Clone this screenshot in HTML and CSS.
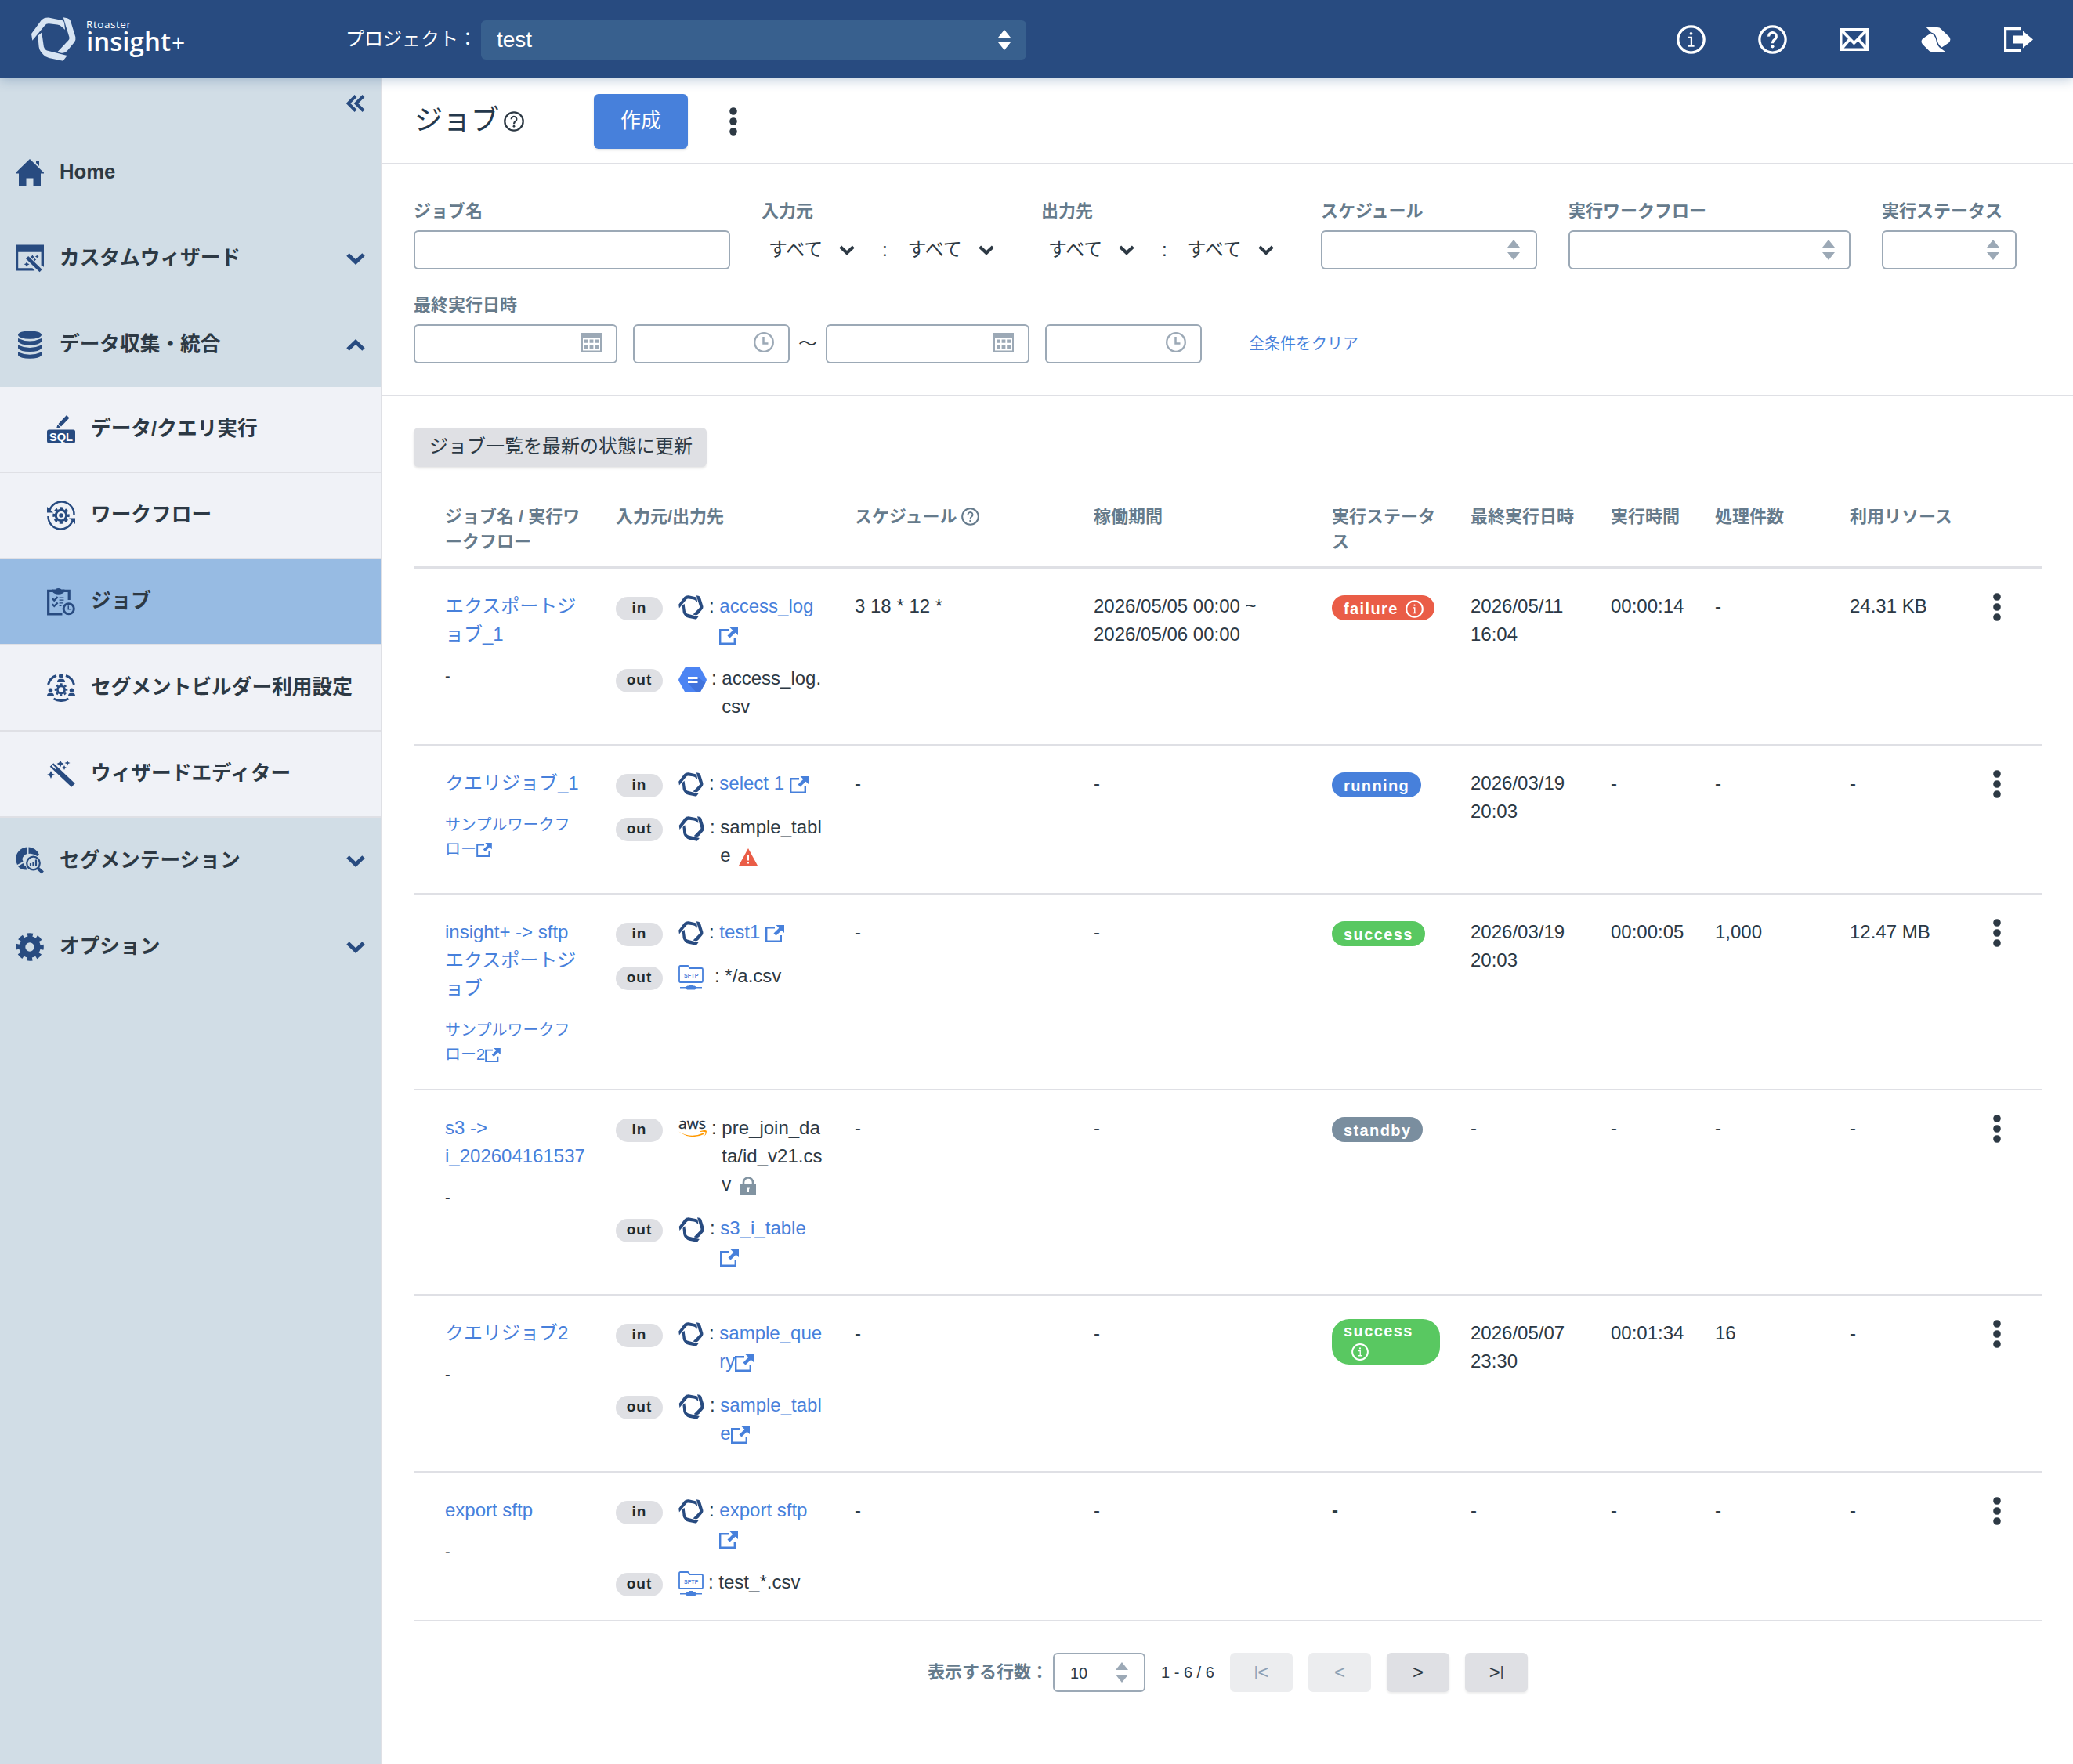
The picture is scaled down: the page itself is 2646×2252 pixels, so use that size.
FILE: index.html
```html
<!DOCTYPE html>
<html lang="ja">
<head>
  <meta charset="UTF-8"/>
  <title>ジョブ - Rtoaster insight+</title>
  <link rel="stylesheet" href="styles.css">
</head>
<body>
  <!-- アイコン定義 -->
  <svg class="defs" width="0" height="0">
    <symbol id="ring" viewBox="30 36 172 169">
      <path d="M30 100L68 48Q80 36 100 38L148 48Q156 50 157 60L160 84L146 72Q140 66 130 65L98 61Q88 60 82 68L34 126Z"/>
      <path d="M153 37L168 40Q178 42 181 50L200 112Q202 122 196 132L168 166Q158 176 146 174L130 170L172 126Q178 120 176 112L164 74Z"/>
      <path d="M55 108L70 95L78 150Q80 160 90 164L120 172L168 184L152 204L98 193Q84 190 76 180L66 168Q60 160 59 150Z"/>
    </symbol>
    <symbol id="info" viewBox="0 0 36 36">
      <circle cx="18" cy="18" r="16.2" fill="none" stroke="currentColor" stroke-width="3.2"/>
      <circle cx="18" cy="10.5" r="1.8"/>
      <path d="M14.5 15.5H18.4V25.8M14 25.8H22" fill="none" stroke="currentColor" stroke-width="2.2"/>
    </symbol>
    <symbol id="help" viewBox="0 0 36 36">
      <circle cx="18" cy="18" r="16.2" fill="none" stroke="currentColor" stroke-width="3.2"/>
      <path d="M13.3 14.2a4.7 4.7 0 1 1 7.4 3.7c-2 1.3-2.7 2-2.7 4.6" fill="none" stroke="currentColor" stroke-width="3"/>
      <circle cx="18" cy="26.6" r="2"/>
    </symbol>
    <symbol id="mail" viewBox="0 0 37 29">
      <path d="M1.7 1.7H35.3V27.3H1.7ZM2 2L14 14.5L18.5 19L23 14.5L35 2M2 27L13.5 13.5M35 27L23.5 13.5" fill="none" stroke="currentColor" stroke-width="3.6"/>
    </symbol>
    <symbol id="bird" viewBox="0 0 38 31">
      <path d="M6.8 0H21Q24 0 26 2.4L36 12Q39 16 35.5 19.5L26.5 25.6C22 22 21.5 19 20.2 15C19 9.500 17 7.500 13.2 6.500Z"/>
      <path d="M12.400 7.500L2 14.500Q-1 18 2 21.500L10.500 30Q11.500 31 13 31H31L25.500 27C20.500 23.500 20 20 19.200 16C18.200 11 15.500 9 12.400 7.500Z"/>
    </symbol>
    <symbol id="logout" viewBox="0 0 37 31">
      <path d="M22 1.6H1.6V29.4H22" fill="none" stroke="currentColor" stroke-width="3.2"/>
      <path d="M12 10.5H24V4.5L37 15.5L24 26.5V20.5H12Z"/>
    </symbol>
    <symbol id="updown" viewBox="0 0 16 26">
      <path d="M8 0L16 10H0ZM0 16H16L8 26Z"/>
    </symbol>
    <symbol id="down" viewBox="0 0 24 15">
      <path d="M2 2L12 11.5L22 2" fill="none" stroke="currentColor" stroke-width="5"/>
    </symbol>
    <symbol id="up" viewBox="0 0 24 15">
      <path d="M2 13L12 3.5L22 13" fill="none" stroke="currentColor" stroke-width="5"/>
    </symbol>
    <symbol id="collapse" viewBox="0 0 24 22">
      <path d="M12 1.5L2.5 11L12 20.5M22 1.5L12.5 11L22 20.5" fill="none" stroke="currentColor" stroke-width="4"/>
    </symbol>
    <symbol id="home" viewBox="0 0 36 34">
      <path d="M18 0L36 17.5V18.5H32V34H22.5V24.5H13.5V34H4V18.5H0V17.5ZM26 2H30V9L26 5Z"/>
    </symbol>
    <symbol id="sparkles" viewBox="0 0 36 34">
      <path d="M6 5.500L33.500 31.500" fill="none" stroke="currentColor" stroke-width="6.5"/>
      <path d="M6.500 6L11.500 10.700" fill="none" stroke="#f0f2f7" stroke-width="1.8"/>
      <path d="M17 -.5L18.5 2.5L21.5 4L18.5 5.5L17 8.500L15.5 5.5L12.5 4L15.5 2.5ZM26 -.5L27 2L29.5 3L27 4L26 6.5L25 4L22.5 3L25 2ZM22 6L23 8L25 9L23 10L22 12L21 10L19 9L21 8ZM5 13L6.600 16.400L10 18L6.600 19.600L5 23L3.400 19.600L0 18L3.400 16.400Z"/>
    </symbol>
    <symbol id="wizard" viewBox="0 0 37 36">
      <path d="M0 0H37V29L33.5 27V9.5H3.3V30.5H22L25 34H0Z"/>
      <path d="M15 16.5L33 34" fill="none" stroke="currentColor" stroke-width="4.6"/>
      <path d="M22 13l1 2 2 1-2 1-1 2-1-2-2-1 2-1ZM28 13l.8 1.7 1.7.8-1.7.8L28 18l-.8-1.7-1.7-.8 1.7-.8ZM25 17.5l.7 1.3 1.3.7-1.3.7L25 21.5l-.7-1.3-1.3-.7 1.3-.7ZM14.5 22l1.2 2.3 2.3 1.2-2.3 1.2-1.2 2.3-1.2-2.3-2.3-1.2 2.3-1.2Z"/>
    </symbol>
    <symbol id="db" viewBox="0 0 36 36">
      <ellipse cx="18" cy="5.5" rx="15" ry="5.3"/>
      <path d="M3 10Q18 17 33 10V14Q30 18.5 18 18.5Q6 18.5 3 14ZM3 18.5Q18 25.5 33 18.5V22.5Q30 27 18 27Q6 27 3 22.5ZM3 27.5Q18 34 33 27.5V31.5Q30 35.8 18 35.8Q6 35.8 3 31.5Z"/>
    </symbol>
    <symbol id="sql" viewBox="0 0 36 36">
      <path d="M25 0L28.5 3.5L18 14.5L14.5 11ZM13.5 12L17.3 15.6L12 17Z"/>
      <rect y="18.500" width="36" height="17" rx="2.5"/>
      <text x="3" y="32.500" font-size="15.5" font-weight="bold" fill="#fff" textLength="30" lengthAdjust="spacingAndGlyphs">SQL</text>
    </symbol>
    <symbol id="gear" viewBox="0 0 36 36">
      <circle cx="18" cy="18" r="9.7" fill="none" stroke="currentColor" stroke-width="8"/>
      <circle cx="18" cy="18" r="14.8" fill="none" stroke="currentColor" stroke-width="6" stroke-dasharray="6.6 5.024" stroke-dashoffset="3.3"/>
    </symbol>
    <symbol id="ogear" viewBox="0 0 36 36">
      <circle cx="18" cy="18" r="11" fill="none" stroke="currentColor" stroke-width="5"/>
      <circle cx="18" cy="18" r="15" fill="none" stroke="currentColor" stroke-width="5" stroke-dasharray="6.6 5.181" stroke-dashoffset="3.3"/>
      <circle cx="18" cy="18" r="4.5"/>
    </symbol>
    <symbol id="flow" viewBox="0 0 36 36">
      <path d="M3.5 11A16 16 0 0 1 34.5 17M32.5 25A16 16 0 0 1 1.5 19" fill="none" stroke="currentColor" stroke-width="2.5"/>
      <path d="M0 7V14.5H8ZM36 29V21.5H28Z"/>
      <use href="#ogear" x="7" y="7" width="22" height="22"/>
    </symbol>
    <symbol id="job" viewBox="0 0 37 36">
      <path d="M8 4H1.7V34.3H20M29 16V4H22" fill="none" stroke="currentColor" stroke-width="3.3"/>
      <path d="M7 2H11Q15 -1 19 2H23V5Q21 8.5 15 8.5Q9 8.5 7 5Z"/>
      <path d="M7 14L9.5 16.5L14 12M7 21.5L9.5 24L14 19.5" fill="none" stroke="currentColor" stroke-width="2.4"/>
      <path d="M16 13H22M16 16H22M16 20H21M16 23.5H19" fill="none" stroke="currentColor" stroke-width="1.3"/>
      <circle cx="28.5" cy="27.5" r="6.8" fill="none" stroke="currentColor" stroke-width="3"/>
      <path d="M28 23.5V28H32" fill="none" stroke="currentColor" stroke-width="1.5"/>
    </symbol>
    <symbol id="person" viewBox="0 0 10 11">
      <circle cx="5" cy="3" r="3"/>
      <path d="M0 11Q0 7 3.5 6.8H6.5Q10 7 10 11Z"/>
    </symbol>
    <symbol id="builder" viewBox="0 0 36 36">
      <path d="M1.5 14Q4 5 12 2.5M34.5 14Q32 5 24 2.5M8.5 32Q18 37 27.5 32" fill="none" stroke="currentColor" stroke-width="3"/>
      <use href="#person" x="13" y="0" width="10" height="11"/>
      <use href="#person" x="0" y="18" width="9" height="11"/>
      <use href="#person" x="27" y="18" width="9" height="11"/>
      <circle cx="18" cy="20.5" r="4.6" fill="none" stroke="currentColor" stroke-width="2.8"/>
      <circle cx="18" cy="20.5" r="7" fill="none" stroke="currentColor" stroke-width="2.6" stroke-dasharray="2.8 2.698" stroke-dashoffset="1.4"/>
    </symbol>
    <symbol id="segment" viewBox="0 0 36 36">
      <path d="M14.5 .5V9Q9.5 10.500 8.5 16L9.5 19L2 23Q-2.5 13 4 5.5Q8 .8 14.5 .5ZM16.5 .5Q26 1 30 10L27.5 12Q20 8 16.500 9ZM3 25L9.5 21Q11 24 13 25L14.5 29.5Q7 30 3 25Z"/>
      <circle cx="22.5" cy="21" r="8.3" fill="none" stroke="currentColor" stroke-width="2.2"/>
      <path d="M19 24.5V21M22.5 24.5V19M26 24.5V16.5" stroke="currentColor" stroke-width="2.2"/>
      <path d="M28.5 27.5L34.5 33" stroke="currentColor" stroke-width="4.2"/>
    </symbol>
    <symbol id="ext" viewBox="0 0 24 22">
      <path d="M12 3.2H1.2V20.8H19.8V13" fill="none" stroke="currentColor" stroke-width="2.4"/>
      <path d="M13.5 0H24V10L20.5 6.8L13.5 13.5L10.5 10.5L17.3 3.7Z"/>
    </symbol>
    <symbol id="calendar" viewBox="0 0 26 25">
      <path fill-rule="evenodd" d="M0 0H26V25H0ZM2 7V22.500H24V7Z"/>
      <path d="M4 8.500H8.800V12.800H4ZM10.600 8.500H15.400V12.800H10.600ZM17.200 8.500H22V12.800H17.200ZM4 15.500H8.800V20.500H4ZM10.600 15.500H15.400V20.500H10.600ZM17.200 15.500H22V20.500H17.200Z"/>
    </symbol>
    <symbol id="clock" viewBox="0 0 26 26">
      <circle cx="13" cy="13" r="11.8" fill="none" stroke="currentColor" stroke-width="2.3"/>
      <path d="M12.5 6V14.5H18.5" fill="none" stroke="currentColor" stroke-width="2.5"/>
    </symbol>
    <symbol id="warn" viewBox="0 0 24 22">
      <path d="M12 0L24 22H0Z" fill="#ea5d47"/>
      <path d="M12 8V15.5M12 17.2V19.5" stroke="#fff" stroke-width="2"/>
    </symbol>
    <symbol id="lock" viewBox="0 0 20 24">
      <path d="M4 11V7.5A6 6 0 0 1 16 7.5V11" fill="none" stroke="currentColor" stroke-width="2.6"/>
      <rect y="10" width="20" height="14"/>
      <path d="M8 14.5H12L11 16.5V20H9V16.5Z" fill="#fff"/>
    </symbol>
    <symbol id="gcs" viewBox="0 0 36 32">
      <path d="M9.5 0H26.5Q27.5 0 28 1L35.5 14.5Q36.3 16 35.5 17.5L28 31Q27.5 32 26.5 32H9.5Q8.5 32 8 31L.5 17.5Q-.3 16 .5 14.5L8 1Q8.5 0 9.5 0Z" fill="#4c84f3"/>
      <path d="M12 20L24 12L34.5 19.5L28 31Q27.5 32 26.5 32H23Z" fill="#4173dc"/>
      <path d="M12 12H24.5V15H12ZM12 17H24.5V20H12Z" fill="#fff"/>
    </symbol>
    <symbol id="sftp" viewBox="0 0 32 32">
      <path d="M1 20.5V2.5Q1 1 2.5 1H11.5Q12.5 1 13 2L14.5 4H29.5Q31 4 31 5.5V20.5Q31 22 29.5 22H2.5Q1 22 1 20.5Z" fill="none" stroke="currentColor" stroke-width="1.8"/>
      <text x="7" y="15.500" font-size="7" font-weight="bold" textLength="18.5">SFTP</text>
      <path d="M2 28H9L11.5 26.5H14V25H18V26.5H20.5L23 28H30V29.5H23L21 31.5H11L9 29.5H2Z"/>
    </symbol>
    <symbol id="aws" viewBox="0 0 36 24">
      <text x="0" y="13" font-size="18" font-family="Open Sans" fill="#252f3e" textLength="35" lengthAdjust="spacingAndGlyphs" stroke="#252f3e" stroke-width=".3">aws</text>
      <path d="M0 16.5Q16 26 31.500 18.5L32.5 20Q16 28 0 16.5ZM28 16Q36 14 36 16.5Q36 20 33 22.5Q35 18.5 34.5 17.5Q33 16.5 28 17Z" fill="#f90"/>
    </symbol>
    <symbol id="dots" viewBox="0 0 10 36">
      <circle cx="5" cy="5" r="4.8"/><circle cx="5" cy="18" r="4.8"/><circle cx="5" cy="31" r="4.8"/>
    </symbol>
  </svg>

  <header class="header">
    <div class="logo">
      <svg width="57" height="56"><use href="#ring"/></svg>
      <svg class="logo-text" width="128" height="60">
        <text x="0" y="17.7" font-size="13.5" font-weight="500" textLength="57">Rtoaster</text>
        <text x="0" y="46.7" font-size="33" font-weight="600" textLength="108">insight</text>
        <text x="109" y="46.7" font-size="30" font-weight="400">+</text>
      </svg>
    </div>
    <span class="project-label">プロジェクト：</span>
    <div class="project-select">test<svg width="16" height="26"><use href="#updown"/></svg></div>
    <nav class="header-nav">
      <a><svg width="37" height="37"><use href="#info"/></svg></a>
      <a><svg width="37" height="37"><use href="#help"/></svg></a>
      <a><svg width="37" height="29"><use href="#mail"/></svg></a>
      <a><svg width="38" height="31"><use href="#bird"/></svg></a>
      <a class="logout"><svg width="37" height="31"><use href="#logout"/></svg></a>
    </nav>
  </header>

  <div class="layout">
    <aside class="sidebar">
      <div class="collapse"><svg width="24" height="22"><use href="#collapse"/></svg></div>
      <a class="menu"><svg width="36" height="34"><use href="#home"/></svg><span>Home</span></a>
      <a class="menu"><svg width="37" height="36"><use href="#wizard"/></svg><span>カスタムウィザード</span><svg class="arrow" width="24" height="15"><use href="#down"/></svg></a>
      <a class="menu"><svg width="36" height="36"><use href="#db"/></svg><span>データ収集・統合</span><svg class="arrow" width="24" height="15"><use href="#up"/></svg></a>
      <div class="submenu">
        <a class="menu"><svg width="36" height="36"><use href="#sql"/></svg><span>データ/クエリ実行</span></a>
        <a class="menu"><svg width="36" height="36"><use href="#flow"/></svg><span>ワークフロー</span></a>
        <a class="menu active"><svg width="37" height="36"><use href="#job"/></svg><span>ジョブ</span></a>
        <a class="menu"><svg width="36" height="36"><use href="#builder"/></svg><span>セグメントビルダー利用設定</span></a>
        <a class="menu"><svg width="36" height="34"><use href="#sparkles"/></svg><span>ウィザードエディター</span></a>
      </div>
      <a class="menu"><svg width="36" height="36"><use href="#segment"/></svg><span>セグメンテーション</span><svg class="arrow" width="24" height="15"><use href="#down"/></svg></a>
      <a class="menu"><svg width="36" height="36"><use href="#gear"/></svg><span>オプション</span><svg class="arrow" width="24" height="15"><use href="#down"/></svg></a>
    </aside>

    <main class="main">
      <div class="title-bar">
        <h1>ジョブ</h1>
        <svg class="title-help" width="26" height="26"><use href="#help"/></svg>
        <button class="btn-create">作成</button>
        <svg class="title-dots" width="10" height="36"><use href="#dots"/></svg>
      </div>

      <!-- 検索条件 -->
      <section class="filters">
        <div class="filter-row">
          <div class="field">
            <label>ジョブ名</label>
            <div class="box w-name"></div>
          </div>
          <div class="field">
            <label>入力元</label>
            <div class="pair">
              <span class="plain">すべて<svg width="20" height="13"><use href="#down"/></svg></span>
              <span class="colon">:</span>
              <span class="plain">すべて<svg width="20" height="13"><use href="#down"/></svg></span>
            </div>
          </div>
          <div class="field">
            <label>出力先</label>
            <div class="pair">
              <span class="plain">すべて<svg width="20" height="13"><use href="#down"/></svg></span>
              <span class="colon">:</span>
              <span class="plain">すべて<svg width="20" height="13"><use href="#down"/></svg></span>
            </div>
          </div>
          <div class="field">
            <label>スケジュール</label>
            <div class="box w-schedule"><svg width="16" height="26"><use href="#updown"/></svg></div>
          </div>
          <div class="field">
            <label>実行ワークフロー</label>
            <div class="box w-workflow"><svg width="16" height="26"><use href="#updown"/></svg></div>
          </div>
          <div class="field">
            <label>実行ステータス</label>
            <div class="box w-status"><svg width="16" height="26"><use href="#updown"/></svg></div>
          </div>
        </div>
        <div class="field">
          <label>最終実行日時</label>
          <div class="dates">
            <div class="box w-date"><svg width="26" height="25"><use href="#calendar"/></svg></div>
            <div class="box w-time"><svg width="26" height="26"><use href="#clock"/></svg></div>
            <span class="tilde">〜</span>
            <div class="box w-date"><svg width="26" height="25"><use href="#calendar"/></svg></div>
            <div class="box w-time"><svg width="26" height="26"><use href="#clock"/></svg></div>
            <a class="clear">全条件をクリア</a>
          </div>
        </div>
      </section>

      <!-- ジョブ一覧 -->
      <section class="list">
        <button class="btn-refresh">ジョブ一覧を最新の状態に更新</button>
        <table class="jobs">
          <colgroup>
            <col class="c-name"><col class="c-io"><col class="c-sched"><col class="c-period"><col class="c-status">
            <col class="c-last"><col class="c-time"><col class="c-count"><col class="c-res"><col class="c-menu">
          </colgroup>
          <thead>
            <tr>
              <th>ジョブ名 / 実行ワ<br>ークフロー</th>
              <th>入力元/出力先</th>
              <th>スケジュール <svg class="th-help" width="23" height="23"><use href="#help"/></svg></th>
              <th>稼働期間</th>
              <th>実行ステータ<br>ス</th>
              <th>最終実行日時</th>
              <th>実行時間</th>
              <th>処理件数</th>
              <th>利用リソース</th>
              <th></th>
            </tr>
          </thead>
          <tbody>
            <tr class="h-226">
              <td><a>エクスポートジ<br>ョブ_1</a><div class="sub">-</div></td>
              <td>
                <div class="io"><span class="tag">in</span><svg class="brand" width="32" height="31"><use href="#ring"/></svg><span>:&nbsp;</span><a>access_log<br><svg class="ext" width="24" height="22"><use href="#ext"/></svg></a></div>
                <div class="io"><span class="tag">out</span><svg width="36" height="32"><use href="#gcs"/></svg><span>:&nbsp;</span><span>access_log.<br>csv</span></div>
              </td>
              <td>3 18 * 12 *</td>
              <td>2026/05/05 00:00 ~<br>2026/05/06 00:00</td>
              <td><span class="status failure">failure<svg width="23" height="23"><use href="#info"/></svg></span></td>
              <td>2026/05/11<br>16:04</td>
              <td>00:00:14</td>
              <td>-</td>
              <td>24.31 KB</td>
              <td><svg class="dots" width="10" height="36"><use href="#dots"/></svg></td>
            </tr>
            <tr class="h-190">
              <td><a>クエリジョブ_1</a><div class="sub"><a>サンプルワークフ<br>ロー<svg class="ext" width="20" height="18"><use href="#ext"/></svg></a></div></td>
              <td>
                <div class="io"><span class="tag">in</span><svg class="brand" width="32" height="31"><use href="#ring"/></svg><span>:&nbsp;</span><a>select 1 <svg class="ext" width="24" height="22"><use href="#ext"/></svg></a></div>
                <div class="io"><span class="tag">out</span><svg class="brand" width="34" height="32"><use href="#ring"/></svg><span>:&nbsp;</span><span>sample_tabl<br>e <svg class="warn" width="24" height="22"><use href="#warn"/></svg></span></div>
              </td>
              <td>-</td>
              <td>-</td>
              <td><span class="status running">running</span></td>
              <td>2026/03/19<br>20:03</td>
              <td>-</td>
              <td>-</td>
              <td>-</td>
              <td><svg class="dots" width="10" height="36"><use href="#dots"/></svg></td>
            </tr>
            <tr class="h-250">
              <td><a>insight+ -&gt; sftp<br>エクスポートジ<br>ョブ</a><div class="sub"><a>サンプルワークフ<br>ロー2<svg class="ext" width="20" height="18"><use href="#ext"/></svg></a></div></td>
              <td>
                <div class="io"><span class="tag">in</span><svg class="brand" width="32" height="31"><use href="#ring"/></svg><span>:&nbsp;</span><a>test1 <svg class="ext" width="24" height="22"><use href="#ext"/></svg></a></div>
                <div class="io"><span class="tag">out</span><svg class="folder wide" width="32" height="32"><use href="#sftp"/></svg><span>:&nbsp;</span><span>*/a.csv</span></div>
              </td>
              <td>-</td>
              <td>-</td>
              <td><span class="status success">success</span></td>
              <td>2026/03/19<br>20:03</td>
              <td>00:00:05</td>
              <td>1,000</td>
              <td>12.47 MB</td>
              <td><svg class="dots" width="10" height="36"><use href="#dots"/></svg></td>
            </tr>
            <tr class="h-262">
              <td><a>s3 -&gt;<br>i_202604161537</a><div class="sub">-</div></td>
              <td>
                <div class="io"><span class="tag">in</span><svg class="aws" width="36" height="24"><use href="#aws"/></svg><span>:&nbsp;</span><span>pre_join_da<br>ta/id_v21.cs<br>v <svg class="lock" width="20" height="24"><use href="#lock"/></svg></span></div>
                <div class="io"><span class="tag">out</span><svg class="brand" width="34" height="32"><use href="#ring"/></svg><span>:&nbsp;</span><a>s3_i_table<br><svg class="ext" width="24" height="22"><use href="#ext"/></svg></a></div>
              </td>
              <td>-</td>
              <td>-</td>
              <td><span class="status standby">standby</span></td>
              <td>-</td>
              <td>-</td>
              <td>-</td>
              <td>-</td>
              <td><svg class="dots" width="10" height="36"><use href="#dots"/></svg></td>
            </tr>
            <tr class="h-226">
              <td><a>クエリジョブ2</a><div class="sub">-</div></td>
              <td>
                <div class="io"><span class="tag">in</span><svg class="brand" width="32" height="31"><use href="#ring"/></svg><span>:&nbsp;</span><a>sample_que<br>ry<svg class="ext" width="24" height="22"><use href="#ext"/></svg></a></div>
                <div class="io"><span class="tag">out</span><svg class="brand" width="34" height="32"><use href="#ring"/></svg><span>:&nbsp;</span><a>sample_tabl<br>e<svg class="ext" width="24" height="22"><use href="#ext"/></svg></a></div>
              </td>
              <td>-</td>
              <td>-</td>
              <td><span class="status success two-line">success<svg width="22" height="22"><use href="#info"/></svg></span></td>
              <td>2026/05/07<br>23:30</td>
              <td>00:01:34</td>
              <td>16</td>
              <td>-</td>
              <td><svg class="dots" width="10" height="36"><use href="#dots"/></svg></td>
            </tr>
            <tr class="h-190">
              <td><a>export sftp</a><div class="sub">-</div></td>
              <td>
                <div class="io"><span class="tag">in</span><svg class="brand" width="32" height="31"><use href="#ring"/></svg><span>:&nbsp;</span><a>export sftp<br><svg class="ext" width="24" height="22"><use href="#ext"/></svg></a></div>
                <div class="io"><span class="tag">out</span><svg class="folder" width="32" height="32"><use href="#sftp"/></svg><span>:&nbsp;</span><span>test_*.csv</span></div>
              </td>
              <td>-</td>
              <td>-</td>
              <td><b>-</b></td>
              <td>-</td>
              <td>-</td>
              <td>-</td>
              <td>-</td>
              <td><svg class="dots" width="10" height="36"><use href="#dots"/></svg></td>
            </tr>
          </tbody>
        </table>

        <div class="pager">
          <span class="pager-label">表示する行数：</span>
          <div class="box pager-select"><span>10</span><svg width="16" height="26"><use href="#updown"/></svg></div>
          <span class="pager-count">1 - 6 / 6</span>
          <button disabled><span class="bar">|</span>&lt;</button>
          <button disabled>&lt;</button>
          <button>&gt;</button>
          <button>&gt;<span class="bar">|</span></button>
        </div>
      </section>
    </main>
  </div>
</body>
</html>
```
FILE: styles.css
```css
* { box-sizing: border-box; }
body {
  margin: 0;
  font-family: 'Liberation Sans', 'Noto Sans CJK JP', sans-serif;
  font-size: 24px;
  line-height: 36px;
  color: #2d3944;
  background-color: #fff;
}
svg { fill: currentColor; display: block; flex: none; overflow: visible; }
.defs { display: none; }
button { font-family: inherit; font-size: 24px; border: none; border-radius: 6px; padding: 0; color: #2d3944; }
a { color: #4780db; text-decoration: none; }

/* ヘッダー */
.header {
  position: relative;
  display: flex;
  align-items: center;
  height: 100px;
  padding: 0 51px 0 40px;
  background-color: #284b80;
  color: #fff;
  box-shadow: 0 2px 14px rgba(40, 85, 135, 0.3);
}
.logo { display: flex; align-items: center; width: 401px; color: #d7e4f2; }
.logo-text { margin-left: 13px; margin-top: -4px; color: #fff; font-family: 'Open Sans', sans-serif; }
.project-label { width: 173px; white-space: nowrap; }
.project-select {
  display: flex;
  align-items: center;
  justify-content: space-between;
  width: 696px;
  height: 50px;
  margin-top: 2px;
  padding: 0 20px;
  border-radius: 6px;
  background-color: #38608e;
  font-size: 28px;
}
.header-nav { display: flex; align-items: center; gap: 67px; margin-left: auto; }
.header-nav a { color: #fff; width: 37px; }
.header-nav .logout { margin-left: 2px; }

/* サイドバー */
.layout { display: flex; min-height: 2152px; }
.sidebar { width: 488px; background-color: #d1dde6; border-right: 2px solid #dfe0e5; flex: none; }
.collapse { height: 65px; padding: 21px 20px 0 0; color: #284b80; display: flex; justify-content: flex-end; }
.menu {
  display: flex;
  align-items: center;
  height: 110px;
  padding: 0 20px;
  color: #284b80;
  font-size: 25.7px;
  font-weight: bold;
}
.menu svg:first-child { width: 36px; }
.menu span { margin-left: 20px; padding-bottom: 2px; color: #2d3944; white-space: nowrap; }
.menu .arrow { margin-left: auto; }
.submenu { margin-top: -1px; }
.submenu .menu { padding-left: 60px; background-color: #f0f2f7; border-bottom: 2px solid #dfe0e5; }
.submenu .menu.active { background-color: #97bbe3; }

/* タイトル */
.main { flex: 1; }
.title-bar { display: flex; align-items: center; height: 110px; padding: 2px 0 0 41px; border-bottom: 2px solid #dfe0e5; }
.title-bar h1 { margin: 0; padding-bottom: 2px; width: 114px; font-size: 36px; font-weight: normal; color: #24384c; }
.btn-create { width: 120px; height: 70px; margin-left: 89px; padding-bottom: 8px; background-color: #4780db; color: #fff; font-size: 26px; box-shadow: 0 2px 3px rgba(0, 0, 0, 0.1); }
.title-dots { margin-left: 53px; }

/* 検索条件 */
.filters { padding: 44px 0 40px 40px; border-bottom: 2px solid #dfe0e5; }
.filter-row { display: flex; gap: 40px; margin-bottom: 30px; }
.field label { display: block; margin-bottom: 8px; line-height: 32px; font-size: 22px; font-weight: bold; color: #667b8c; }
.box {
  display: flex;
  align-items: center;
  justify-content: flex-end;
  height: 50px;
  padding-right: 20px;
  border: 2px solid #9ca9b6;
  border-radius: 6px;
  color: #9ca9b6;
}
.w-name { width: 404px; }
.w-schedule { width: 276px; }
.w-workflow { width: 360px; padding-right: 18px; }
.w-status { width: 172px; }
.w-date { width: 260px; padding: 0 18px 4px 0; }
.w-time { width: 200px; padding: 0 18px 4px 0; }
.pair { display: flex; align-items: center; width: 317px; height: 50px; padding-left: 9px; }
.plain { display: flex; align-items: center; gap: 21px; }
.colon { width: 67px; padding-left: 9px; text-align: center; }
.dates { display: flex; align-items: center; }
.dates .w-date { margin-right: 20px; }
.tilde { width: 46px; text-align: center; }
.clear { margin-left: 60px; font-size: 20px; }

/* 一覧 */
.list { padding: 40px 40px 0; }
.btn-refresh { display: block; width: 374px; height: 50px; padding: 0 0 7px 2px; background-color: #dfe0e4; box-shadow: 0 2px 3px rgba(0, 0, 0, 0.1); white-space: nowrap; }
.jobs { width: 2078px; margin-top: 24px; table-layout: fixed; border-collapse: separate; border-spacing: 0; }
.c-name { width: 258px; }
.c-io { width: 305px; }
.c-sched { width: 305px; }
.c-period { width: 304px; }
.c-status { width: 177px; }
.c-last { width: 179px; }
.c-time { width: 133px; }
.c-count { width: 172px; }
.c-res { width: 184px; }
.c-menu { width: 61px; }
.jobs th {
  height: 106px;
  padding: 24px 0 0;
  vertical-align: top;
  text-align: left;
  font-size: 22px;
  line-height: 32px;
  color: #667b8c;
  border-bottom: 4px solid #dfe0e5;
  white-space: nowrap;
}
.jobs th:first-child, .jobs td:first-child { padding-left: 40px; }
.th-help { display: inline-block; vertical-align: -4px; margin-left: -1px; }
.jobs td { padding: 30px 0 0; vertical-align: top; border-bottom: 2px solid #dfe0e5; white-space: nowrap; }
.h-190 { height: 190px; }
.h-226 { height: 226px; }
.h-250 { height: 250px; }
.h-262 { height: 262px; }
.sub { margin-top: 20px; font-size: 20px; line-height: 31px; }
.io { display: flex; align-items: flex-start; margin-bottom: 20px; }
.io > svg { margin: 4px 6px 0 20px; }
.io:first-child > .brand { margin-right: 7px; }
.io > svg.wide { margin-right: 14px; }
.io > svg.aws { margin-top: 6px; }
.tag {
  width: 60px;
  height: 30px;
  margin-top: 6px;
  border-radius: 15px;
  background-color: #dfe0e4;
  color: #1d2a2f;
  font-size: 19px;
  font-weight: bold;
  line-height: 28px;
  letter-spacing: 1px;
  text-align: center;
}
.brand { color: #284b80; }
.folder { color: #4780db; }
.ext { display: inline-block; vertical-align: -5px; }
.sub .ext { vertical-align: -3px; }
.warn { display: inline-block; vertical-align: -5px; margin-left: 4px; }
.lock { display: inline-block; vertical-align: -6px; margin-left: 5px; color: #8193a1; }
.dots { margin: 1px 0 0 -1px; }
.status {
  display: inline-flex;
  align-items: center;
  height: 32px;
  margin-top: 4px;
  padding: 2px 14px 0 15px;
  border-radius: 16px;
  color: #fff;
  font-size: 20px;
  font-weight: bold;
  line-height: 30px;
  letter-spacing: 1.4px;
  vertical-align: top;
}
.status svg { margin-left: 9px; }
.failure { background-color: #ea5d47; }
.running { background-color: #4780db; padding-right: 15px; }
.success { background-color: #59c861; padding-right: 15px; }
.standby { background-color: #7a8e9f; padding-right: 15px; }
.status.two-line { display: block; width: 138px; height: 58px; margin-top: 0; padding-top: 2px; border-radius: 22px; line-height: 27px; }
.two-line svg { margin: 2px 0 0 10px; }

/* ページャー */
.pager { display: flex; align-items: center; gap: 20px; margin: 40px 0 0 656px; font-size: 20px; }
.pager-label { width: 140px; font-size: 22px; font-weight: bold; color: #667b8c; white-space: nowrap; }
.pager-select { width: 118px; justify-content: space-between; padding-left: 20px; color: #2d3944; }
.pager-select span { padding-top: 2px; }
.pager-select svg { color: #9ca9b6; }
.pager-count { width: 68px; white-space: nowrap; }
.pager button { width: 80px; height: 50px; background-color: #dfe0e4; box-shadow: 0 2px 3px rgba(0, 0, 0, 0.08); }
.pager button:disabled { background-color: #ecedef; color: #8ba0b5; box-shadow: none; }
.bar { font-size: 18px; vertical-align: 3px; }
```
